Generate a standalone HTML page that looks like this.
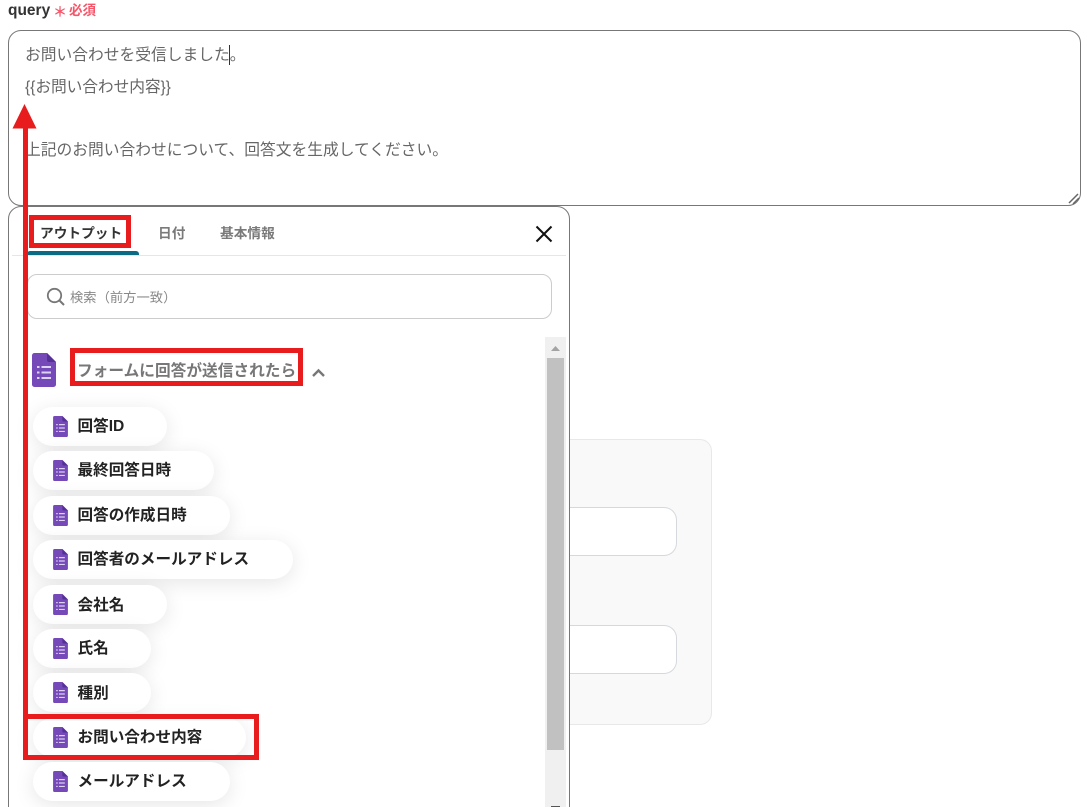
<!DOCTYPE html>
<html lang="ja"><head><meta charset="utf-8"><style>
html,body{margin:0;padding:0;background:#fff;width:1087px;height:807px;overflow:hidden}
body{position:relative;font-family:"Liberation Sans","Noto Sans CJK JP",sans-serif}
.a{position:absolute;box-sizing:border-box;white-space:nowrap}
.t{font-size:15.750px;line-height:22px;color:#666;left:25px}
.p{left:33px;height:39px;background:#fff;border-radius:20px;box-shadow:0 4px 20px rgba(0,0,0,.1)}
.p span{position:absolute;left:44.500px;top:9px;font-size:15.6px;line-height:22px;font-weight:700;color:#222}
.p svg{position:absolute;left:20px;top:9px}
.r{border:5px solid #e81c1c}
</style></head><body>
<svg width="0" height="0" style="position:absolute"><defs>
<symbol id="f" viewBox="0 0 24 34"><path d="M2.500 0H15L24 9V31.500a2.500 2.500 0 0 1-2.500 2.500H2.500a2.500 2.500 0 0 1-2.500-2.500V2.500a2.500 2.500 0 0 1 2.500-2.500Z" fill="#7549b8"/><path d="M15 0L24 9H17a2 2 0 0 1-2-2Z" fill="#553096"/><path d="M5 14h2.500M9.500 14h9.500M5 19.500h2.500M9.500 19.500h9.500M5 25h2.500M9.500 25h9.500" stroke="#ddd2f0" stroke-width="2" fill="none"/></symbol>
</defs></svg>

<div class="a" style="left:8px;top:1px;font-size:15.5px;line-height:20px;font-weight:700;color:#333">query</div>
<div class="a" style="left:53px;top:2px;font-size:14px;line-height:20px;font-weight:700;color:#f5566a">＊</div>
<div class="a" style="left:69px;top:1px;font-size:13.500px;line-height:20px;font-weight:700;color:#f5566a">必須</div>

<div class="a" style="left:8px;top:30px;width:1073px;height:176px;border:1px solid #777;border-radius:13px"></div>
<div class="a t" style="top:45px">お問い合わせを受信しました。</div>
<div class="a" style="left:229px;top:45px;width:1px;height:20px;background:#333"></div>
<div class="a t" style="top:77px;letter-spacing:-.1px">{{お問い合わせ内容}}</div>
<div class="a t" style="top:140px">上記のお問い合わせについて、回答文を生成してください。</div>
<svg class="a" style="left:1066px;top:192px" width="15" height="14"><path d="M3 11L12 2M7 12L13 6" stroke="#666" stroke-width="1.500" fill="none"/></svg>

<div class="a" style="left:570px;top:439px;width:142px;height:286px;background:#f9f9f9;border:1px solid #e8e8e8;border-left:0;border-radius:0 12px 12px 0"></div>
<div class="a" style="left:570px;top:507px;width:107px;height:49px;background:#fff;border:1px solid #d5d8dd;border-left:0;border-radius:0 13px 13px 0"></div>
<div class="a" style="left:570px;top:625px;width:107px;height:49px;background:#fff;border:1px solid #d5d8dd;border-left:0;border-radius:0 13px 13px 0"></div>

<div class="a" style="left:8px;top:206px;width:562px;height:640px;background:#fff;border:1px solid #777;border-radius:13px"></div>

<div class="a" style="left:40px;top:223px;font-size:13.700px;line-height:22px;font-weight:700;color:#333">アウトプット</div>
<div class="a" style="left:158px;top:223px;font-size:13.700px;line-height:22px;font-weight:700;color:#7a7a7a">日付</div>
<div class="a" style="left:220px;top:223px;font-size:13.700px;line-height:22px;font-weight:700;color:#7a7a7a">基本情報</div>
<div class="a" style="left:12px;top:255px;width:554px;height:1px;background:#e6e6e6"></div>
<div class="a" style="left:27px;top:251px;width:112px;height:4px;background:#0b6b84;border-radius:3px 3px 0 0"></div>
<svg class="a" style="left:534px;top:224px" width="20" height="20"><path d="M2.500 2.500L17.500 17.500M17.500 2.500L2.500 17.500" stroke="#111" stroke-width="2" fill="none"/></svg>

<div class="a" style="left:27px;top:274px;width:525px;height:45px;border:1px solid #ccc;border-radius:10px"></div>
<svg class="a" style="left:46px;top:287px" width="20" height="20"><circle cx="8.500" cy="8.500" r="6.700" stroke="#777" stroke-width="1.800" fill="none"/><path d="M13.500 13.500L18 18" stroke="#777" stroke-width="2" fill="none"/></svg>
<div class="a" style="left:70px;top:287px;font-size:13.300px;line-height:22px;color:#888">検索（前方一致）</div>

<svg class="a" style="left:32px;top:353px" width="24" height="34"><use href="#f"/></svg>
<div class="a" style="left:77px;top:360px;font-size:15.700px;line-height:24px;font-weight:700;color:#777">フォームに回答が送信されたら</div>
<svg class="a" style="left:311px;top:367px" width="16" height="11"><path d="M2 9L7.500 3.500L13 9" stroke="#777" stroke-width="2.400" fill="none"/></svg>

<div class="a p" style="top:407px;width:134px"><svg width="15" height="21"><use href="#f"/></svg><span>回答ID</span></div>
<div class="a p" style="top:451px;width:181px"><svg width="15" height="21"><use href="#f"/></svg><span>最終回答日時</span></div>
<div class="a p" style="top:496px;width:197px"><svg width="15" height="21"><use href="#f"/></svg><span>回答の作成日時</span></div>
<div class="a p" style="top:540px;width:260px"><svg width="15" height="21"><use href="#f"/></svg><span>回答者のメールアドレス</span></div>
<div class="a p" style="top:585px;width:134px"><svg width="15" height="21"><use href="#f"/></svg><span style="top:10px">会社名</span></div>
<div class="a p" style="top:629px;width:118px"><svg width="15" height="21"><use href="#f"/></svg><span>氏名</span></div>
<div class="a p" style="top:673px;width:118px"><svg width="15" height="21"><use href="#f"/></svg><span style="top:10px">種別</span></div>
<div class="a p" style="top:718px;width:213px"><svg width="15" height="21"><use href="#f"/></svg><span>お問い合わせ内容</span></div>
<div class="a p" style="top:762px;width:197px"><svg width="15" height="21"><use href="#f"/></svg><span>メールアドレス</span></div>

<div class="a" style="left:545px;top:337px;width:21px;height:470px;background:#f0f0f0"></div>
<div class="a" style="left:547px;top:358px;width:17px;height:392px;background:#c1c1c1"></div>
<svg class="a" style="left:550px;top:344px" width="11" height="8"><path d="M1 7L5.500 2L10 7Z" fill="#a3a3a3"/></svg>
<div class="a" style="left:551px;top:806px;width:9px;height:1px;background:#555"></div>

<div class="a r" style="left:29px;top:215px;width:102px;height:33px"></div>
<div class="a r" style="left:70px;top:348px;width:233px;height:38px"></div>
<div class="a r" style="left:23px;top:714px;width:236px;height:46px"></div>
<div class="a" style="left:22.500px;top:127px;width:5px;height:589px;background:#e81c1c"></div>
<svg class="a" style="left:12px;top:103px" width="25" height="26"><path d="M12.500 1L24.500 25.500H.5Z" fill="#e81c1c"/></svg>
</body></html>
